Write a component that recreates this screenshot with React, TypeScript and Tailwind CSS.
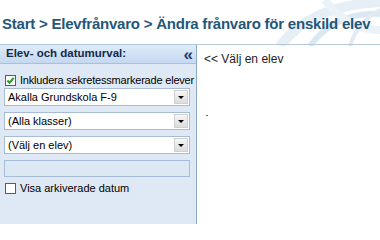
import React from "react";

const SANS = "font-['Liberation_Sans','DejaVu_Sans',sans-serif]";

function Swirl() {
  return (
    <svg
      className="absolute right-0 top-0"
      width="110"
      height="46"
      viewBox="0 0 110 46"
      aria-hidden="true"
    >
      <path d="M10 46 C 30 20, 60 5, 110 2" stroke="#e6eff6" strokeWidth="10" fill="none" />
      <path d="M40 46 C 55 25, 80 12, 110 14" stroke="#dbe8f1" strokeWidth="6" fill="none" />
      <path d="M55 0 C 70 20, 90 30, 110 30" stroke="#ebf2f8" strokeWidth="8" fill="none" />
      <path d="M80 46 C 85 30, 95 18, 110 10" stroke="#e0ebf4" strokeWidth="4" fill="none" />
    </svg>
  );
}

function Select({ label }: { label: string }) {
  return (
    <div className="flex h-[18px] items-center border border-[#a7bcd6] bg-white">
      <span className="flex-1 truncate pl-[3px] text-[11px] leading-none text-black">{label}</span>
      <span className="m-[1px] flex h-[14px] w-[14px] items-center justify-center border border-[#d0d0d0] bg-gradient-to-b from-[#f6f6f6] to-[#dcdcdc]">
        <span className="h-0 w-0 border-x-[3px] border-t-[3px] border-x-transparent border-t-black" />
      </span>
    </div>
  );
}

function Checkbox({ checked }: { checked?: boolean }) {
  return (
    <span className="flex h-[11px] w-[11px] shrink-0 items-center justify-center border border-[#4a5f7a] bg-white">
      {checked && (
        <svg width="9" height="9" viewBox="0 0 10 10" aria-hidden="true">
          <path d="M1.5 5 L4 7.5 L8.5 2" stroke="#2a9a2a" strokeWidth="2.2" fill="none" />
        </svg>
      )}
    </span>
  );
}

export default function App() {
  return (
    <div className={`relative h-[224px] w-[380px] overflow-hidden bg-white ${SANS}`}>
      <Swirl />
      <header className="relative h-[45px] border-b border-[#b5c9dc] pl-[2px] pt-[15px]">
        <h1 className="whitespace-nowrap text-[15px] font-bold leading-[18px] tracking-[-0.22px] text-[#1f5878]">
          Start &gt; Elevfrånvaro &gt; Ändra frånvaro för enskild elev
        </h1>
      </header>

      <div className="flex h-[179px]">
        <aside className="flex w-[197px] flex-col border-r border-[#8eaacb] bg-[#dfe9f6]">
          <div className="flex h-[19px] items-center justify-between border-b border-[#a9c0dc] bg-gradient-to-b from-[#dfebf8] to-[#c4d8f0] pl-[6px] pr-[3px]">
            <span className="text-[11.5px] font-bold text-[#15294b]">Elev- och datumurval:</span>
            <span className="text-[17px] font-bold leading-none text-[#1b3c6e]">«</span>
          </div>

          <div className="flex flex-col px-[4px] pt-[9px]">
            <label className="flex items-center gap-[4px] pl-[1px] text-[11px] leading-[14px] tracking-[-0.2px] text-black whitespace-nowrap">
              <Checkbox checked />
              Inkludera sekretessmarkerade elever
            </label>
            <div className="mt-[1px] flex flex-col gap-[6px] pr-[2px]">
              <Select label="Akalla Grundskola F-9" />
              <Select label="(Alla klasser)" />
              <Select label="(Välj en elev)" />
              <div className="h-[17px] border border-[#a7bcd6] bg-[#dde8f5]" />
            </div>
            <label className="mt-[4px] flex items-center gap-[4px] pl-[1px] text-[11px] leading-[14px] text-black">
              <Checkbox />
              Visa arkiverade datum
            </label>
          </div>
        </aside>

        <main className="relative flex-1 pl-[7px] pt-[5px]">
          <p className="text-[12px] text-[#222]">&lt;&lt; Välj en elev</p>
          <span className="absolute left-[9px] top-[70px] h-[1px] w-[2px] bg-[#d04050]" />
        </main>
      </div>
    </div>
  );
}
